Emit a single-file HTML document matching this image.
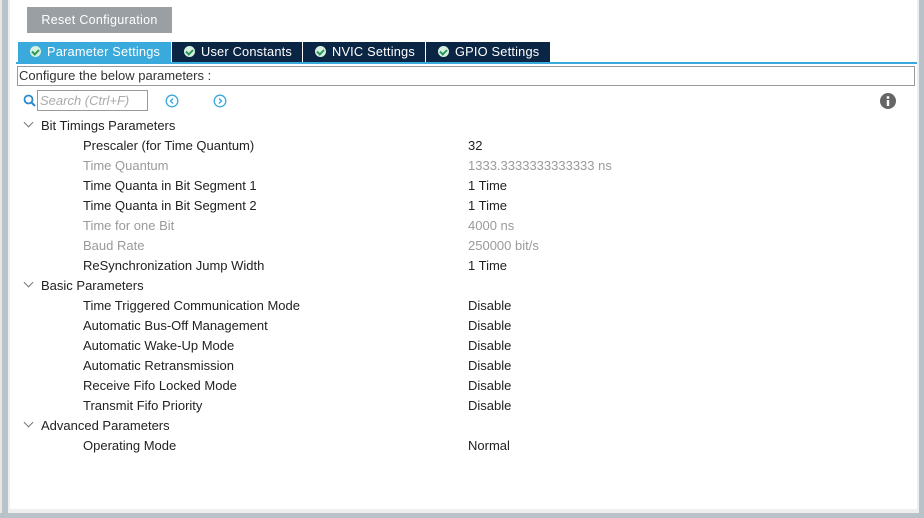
<!DOCTYPE html><html><head><style>
*{margin:0;padding:0;box-sizing:border-box}
body{width:924px;height:518px;background:#fff;font-family:"Liberation Sans",sans-serif;font-size:12px;position:relative;overflow:hidden;color:#222}
.a{position:absolute}
.btn{left:27px;top:7px;width:145px;height:26px;background:#9a9fa3;color:#fff;font-size:12.5px;line-height:26px;text-align:center;letter-spacing:0.3px}
.tab{top:42px;height:20px;line-height:20px;color:#fff;font-size:12.8px;background:#0b2545;padding-left:12px;letter-spacing:0.2px}
.tab i{display:inline-block;width:11px;height:11px;border-radius:50%;background:#d8f0e0;position:relative;vertical-align:-1px;margin-right:6px}
.tab i:after{content:"";position:absolute;left:3px;top:2px;width:3px;height:5px;border:solid #2a9a5a;border-width:0 2px 2px 0;transform:rotate(45deg)}
.r{position:absolute;left:83px;height:20px;line-height:20px;font-size:13px;color:#222}
.v{position:absolute;left:468px;height:20px;line-height:20px;font-size:13px;color:#222}
.g{color:#9a9a9a}
.h{position:absolute;left:41px;height:20px;line-height:20px;font-size:13px;color:#222}
.c{position:absolute;left:25px;width:7px;height:7px;border:solid #777;border-width:0 1px 1px 0;transform:rotate(45deg)}
</style></head><body>
<div class="a" style="left:0;top:0;width:2px;height:518px;background:#e6e6e6"></div>
<div class="a" style="left:2px;top:0;width:6px;height:518px;background:#b8c2c8"></div>
<div class="a" style="left:8px;top:0;width:2px;height:518px;background:#eeeeee"></div>
<div class="a" style="left:917px;top:0;width:2px;height:518px;background:#eeeeee"></div>
<div class="a" style="left:919px;top:0;width:5px;height:518px;background:#b8c2c8"></div>
<div class="a" style="left:8px;top:509px;width:911px;height:4px;background:#eeeeee"></div>
<div class="a" style="left:0;top:513px;width:924px;height:5px;background:#b8c2c8"></div>
<div class="a btn">Reset Configuration</div>
<div class="a tab" style="left:18px;width:153px;background:#3aa9dc"><i></i>Parameter Settings</div>
<div class="a tab" style="left:172px;width:130px"><i></i>User Constants</div>
<div class="a tab" style="left:303px;width:122px"><i></i>NVIC Settings</div>
<div class="a tab" style="left:426px;width:124px"><i></i>GPIO Settings</div>
<div class="a" style="left:16px;top:62px;width:901px;height:2px;background:#3aa9dc"></div>
<div class="a" style="left:17px;top:66px;width:898px;height:20px;border:1px solid #999;line-height:18px;padding-left:1px;font-size:13px;color:#333">Configure the below parameters :</div>
<svg class="a" style="left:23px;top:94px" width="13" height="13"><circle cx="5.5" cy="5.5" r="4" fill="none" stroke="#2a8ad0" stroke-width="1.8"/><line x1="8.5" y1="8.5" x2="12" y2="12" stroke="#2a8ad0" stroke-width="2"/></svg>
<div class="a" style="left:37px;top:90px;width:111px;height:21px;border:1px solid #999;color:#aaa;font-style:italic;font-size:13px;line-height:19px;padding-left:2px">Search (Ctrl+F)</div>
<svg class="a" style="left:165px;top:94px" width="14" height="14"><circle cx="7" cy="7" r="5.8" fill="none" stroke="#3aa9dc" stroke-width="1.3"/><path d="M8 4.5 5.5 7 8 9.5" fill="none" stroke="#3aa9dc" stroke-width="1.4"/></svg>
<svg class="a" style="left:213px;top:94px" width="14" height="14"><circle cx="7" cy="7" r="5.8" fill="none" stroke="#3aa9dc" stroke-width="1.3"/><path d="M6 4.5 8.5 7 6 9.5" fill="none" stroke="#3aa9dc" stroke-width="1.4"/></svg>
<svg class="a" style="left:880px;top:93px" width="16" height="16"><circle cx="8" cy="8" r="8" fill="#666"/><rect x="6.8" y="7" width="2.4" height="6" fill="#fff"/><circle cx="8" cy="4.5" r="1.4" fill="#fff"/></svg>
<div class="c" style="top:119px"></div><div class="h" style="top:116px">Bit Timings Parameters</div>
<div class="r" style="top:136px">Prescaler (for Time Quantum)</div><div class="v" style="top:136px">32</div>
<div class="r g" style="top:156px">Time Quantum</div><div class="v g" style="top:156px">1333.3333333333333 ns</div>
<div class="r" style="top:176px">Time Quanta in Bit Segment 1</div><div class="v" style="top:176px">1 Time</div>
<div class="r" style="top:196px">Time Quanta in Bit Segment 2</div><div class="v" style="top:196px">1 Time</div>
<div class="r g" style="top:216px">Time for one Bit</div><div class="v g" style="top:216px">4000 ns</div>
<div class="r g" style="top:236px">Baud Rate</div><div class="v g" style="top:236px">250000 bit/s</div>
<div class="r" style="top:256px">ReSynchronization Jump Width</div><div class="v" style="top:256px">1 Time</div>
<div class="c" style="top:279px"></div><div class="h" style="top:276px">Basic Parameters</div>
<div class="r" style="top:296px">Time Triggered Communication Mode</div><div class="v" style="top:296px">Disable</div>
<div class="r" style="top:316px">Automatic Bus-Off Management</div><div class="v" style="top:316px">Disable</div>
<div class="r" style="top:336px">Automatic Wake-Up Mode</div><div class="v" style="top:336px">Disable</div>
<div class="r" style="top:356px">Automatic Retransmission</div><div class="v" style="top:356px">Disable</div>
<div class="r" style="top:376px">Receive Fifo Locked Mode</div><div class="v" style="top:376px">Disable</div>
<div class="r" style="top:396px">Transmit Fifo Priority</div><div class="v" style="top:396px">Disable</div>
<div class="c" style="top:419px"></div><div class="h" style="top:416px">Advanced Parameters</div>
<div class="r" style="top:436px">Operating Mode</div><div class="v" style="top:436px">Normal</div>
</body></html>
